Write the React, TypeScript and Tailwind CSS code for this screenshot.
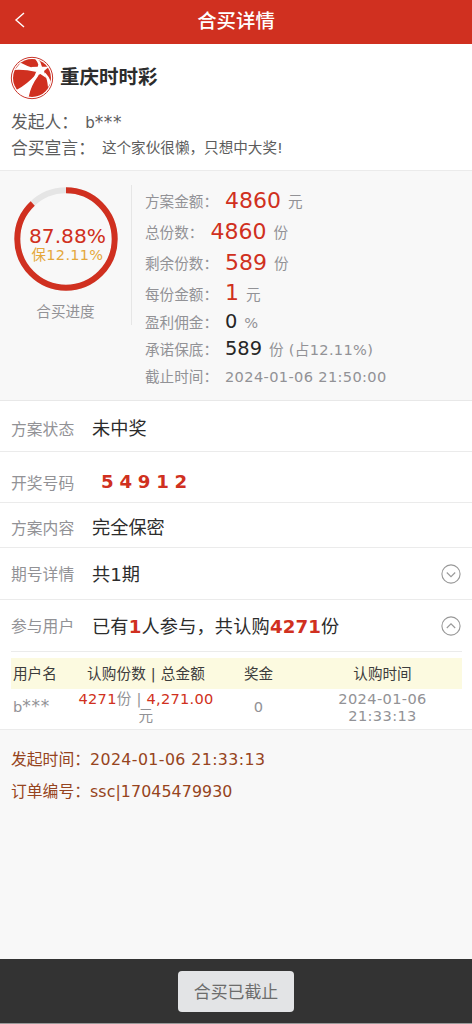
import type { ReactNode } from 'react'

interface StatLine {
  label: string
  value?: string
  unit: string
  dark?: boolean
  height: string
}

const stats: StatLine[] = [
  { label: '方案金额：', value: '4860', unit: '元', height: 'h-[31px]' },
  { label: '总份数：', value: '4860', unit: '份', height: 'h-[31px]' },
  { label: '剩余份数：', value: '589', unit: '份', height: 'h-[31px]' },
  { label: '每份金额：', value: '1', unit: '元', height: 'h-[30px]' },
  { label: '盈利佣金：', value: '0', unit: '%', dark: true, height: 'h-[27px]' },
  { label: '承诺保底：', value: '589', unit: '份 (占12.11%)', dark: true, height: 'h-[27px]' },
]

function Logo() {
  return (
    <svg className="h-11 w-11" viewBox="0 0 132 132">
      <circle cx="66" cy="66" r="62" fill="#fff" stroke="#c9362c" strokeWidth="3" />
      <circle cx="66" cy="66" r="57" fill="#d03020" />
      <g fill="#fff">
        <path d="M78 39 Q52 31 32 20 L14 42 Q44 40 80 48 Z" />
        <path d="M77 56 Q52 84 19 102 Q36 122 56 123 Q62 90 86 58 Z" />
        <path d="M103 54 Q112 68 114 94 L123 78 Q118 62 106 50 Z" />
        <path d="M85 26 Q82 16 75 8 L84 9 L91 22 Z" />
        <path d="M89 13 L96 32 L117 32 L102 45 L109 66 L91 54 L72 64 L79 46 L62 33 L83 32 Z" />
      </g>
    </svg>
  )
}

function ProgressRing({ percent }: { percent: number }) {
  const r = 48.7
  const length = 2 * Math.PI * r
  return (
    <svg className="h-[104px] w-[104px] -rotate-90" viewBox="0 0 104 104" fill="none" strokeWidth="6">
      <circle cx="52" cy="52" r={r} stroke="#e5e5e5" />
      <circle cx="52" cy="52" r={r} stroke="#d03020" strokeDasharray={`${(length * percent) / 100} ${length}`} />
    </svg>
  )
}

function CircleChevron({ up }: { up?: boolean }) {
  return (
    <svg className="h-5 w-5" viewBox="0 0 20 20" fill="none" stroke="#999" strokeWidth="1.1">
      <circle cx="10" cy="10" r="9.1" />
      <path d={up ? 'M5.8 12 L10 7.8 L14.2 12' : 'M5.8 8.5 L10 12.7 L14.2 8.5'} />
    </svg>
  )
}

function Row({ label, height, children }: { label: string; height: string; children: ReactNode }) {
  return (
    <div className={`flex items-center border-b border-[#ebebeb] px-[11px] ${height}`}>
      <span className="w-[81px] pt-0.5 text-[15.8px] text-[#929296]">{label}</span>
      {children}
    </div>
  )
}

export default function App() {
  return (
    <div className="flex h-[1024px] w-[472px] flex-col overflow-hidden bg-[#f8f8f8] font-['DejaVu_Sans','Noto_Sans_CJK_SC',sans-serif] leading-none whitespace-nowrap">
      <header className="flex h-11 shrink-0 items-center bg-[#d03020] pl-[14px] text-white">
        <svg className="-mt-1 h-4 w-3" viewBox="0 0 12 16" fill="none" stroke="currentColor" strokeWidth="1.4">
          <path d="M10 1 L2 8 L10 15" />
        </svg>
        <h1 className="flex-1 pr-[26px] text-center text-[19.4px] font-medium">合买详情</h1>
      </header>

      <section className="h-[127px] shrink-0 border-b border-[#ebebeb] bg-white pt-3 pl-[10px]">
        <div className="flex h-11 items-center">
          <Logo />
          <h2 className="ml-1.5 text-[19.5px] font-bold text-[#2c2c2c]">重庆时时彩</h2>
        </div>
        <div className="mt-[9px] flex h-[26px] items-center pl-px text-[16.8px] text-[#5c5c5c]">
          <span>发起人：</span>
          <span className="ml-[7px] text-[15px]">
            b<span className="text-[17px] tracking-[0.7px]">***</span>
          </span>
        </div>
        <div className="flex h-[26px] items-center pl-px text-[16.8px] text-[#5c5c5c]">
          <span>合买宣言：</span>
          <span className="ml-[7px] pt-px text-[14.6px]">这个家伙很懒，只想中大奖!</span>
        </div>
      </section>

      <section className="flex h-[230px] shrink-0 border-b border-[#e8e8e8] pt-[14px] text-[#929296]">
        <div className="flex h-[140px] w-[132px] flex-col items-center border-r border-[#e6e6e6] pt-0.5">
          <div className="grid place-items-center">
            <div className="col-start-1 row-start-1">
              <ProgressRing percent={87.88} />
            </div>
            <div className="col-start-1 row-start-1 mt-[11px] ml-1 text-center">
              <div className="text-[20.2px] text-[#d03020]">87.88%</div>
              <div className="mt-0.5 text-[14.5px] tracking-[0.3px] text-[#e5a83b]">保12.11%</div>
            </div>
          </div>
          <div className="mt-3.5 text-[14.6px]">合买进度</div>
        </div>
        <div className="pl-[13px] text-[14.6px]">
          {stats.map((s) => (
            <div key={s.label} className={`flex items-center ${s.height}`}>
              <span className="pt-1">{s.label}</span>
              <span className={`ml-[7px] ${s.dark ? 'text-[19.4px] text-[#262626]' : 'text-[22px] text-[#d03020]'}`}>
                {s.value}
              </span>
              <span className="ml-[7px] pt-1 tracking-[0.3px]">{s.unit}</span>
            </div>
          ))}
          <div className="flex h-[29px] items-center pt-px">
            <span>截止时间：</span>
            <span className="ml-[7px] tracking-[0.35px]">2024-01-06 21:50:00</span>
          </div>
        </div>
      </section>

      <section className="shrink-0 bg-white text-[18.2px] text-[#2c2c2c]">
        <Row label="方案状态" height="h-[51px] pt-1.5">未中奖</Row>
        <Row label="开奖号码" height="h-[51px] pt-[11px]">
          <span className="pl-[9px] font-bold tracking-[-0.3px] text-[#d03020]">5 4 9 1 2</span>
        </Row>
        <Row label="方案内容" height="h-[45px] pt-1.5">完全保密</Row>
        <Row label="期号详情" height="h-[52px]">
          <span className="flex-1 pt-1">共1期</span>
          <CircleChevron />
        </Row>
        <div className="flex h-[51px] items-center px-[11px] pt-px">
          <span className="w-[81px] pt-0.5 text-[15.8px] text-[#929296]">参与用户</span>
          <span className="flex-1 pt-[3px] tracking-[0.15px]">
            已有<b className="text-[#d03020]">1</b>人参与，共认购<b className="text-[#d03020]">4271</b>份
          </span>
          <CircleChevron up />
        </div>
        <div className="mr-[10px] ml-[11px] border-t border-[#ebebeb] pt-1.5 text-[14.6px]">
          <div className="flex h-[31px] items-center bg-[#fcfae0] pt-0.5 text-[#3c3c3c]">
            <span className="w-[65px] pl-0.5">用户名</span>
            <span className="w-[140px] text-center tracking-[0.15px]">认购份数 | 总金额</span>
            <span className="w-[85px] text-center">奖金</span>
            <span className="flex-1 pl-0.5 text-center">认购时间</span>
          </div>
          <div className="flex h-10 items-center pb-[5px] leading-[17px] text-[#929296]">
            <span className="w-[65px] pl-0.5">
              b<span className="text-[17px] tracking-[0.7px]">***</span>
            </span>
            <span className="w-[140px] text-center tracking-[0.25px]">
              <span className="text-[#d03020]">4271</span>份 | <span className="text-[#d03020]">4,271.00</span>
              <br />元
            </span>
            <span className="w-[85px] text-center">0</span>
            <span className="flex-1 pl-0.5 text-center tracking-[0.35px]">
              2024-01-06
              <br />
              21:33:13
            </span>
          </div>
        </div>
      </section>

      <section className="flex-1 border-t border-[#ebebeb] pt-[14px] pl-[11px] text-[15.8px] text-[#964420]">
        <div className="flex h-8 items-center">
          <span>发起时间：</span>
          <span className="tracking-[0.4px]">2024-01-06 21:33:13</span>
        </div>
        <div className="flex h-[31px] items-center">
          <span>订单编号：</span>
          <span className="tracking-[0.1px]">ssc|17045479930</span>
        </div>
      </section>

      <footer className="flex h-[65px] shrink-0 items-center justify-center border-b border-[#999] bg-[#333]">
        <button className="h-[41px] w-[116px] rounded bg-[#e3e4e6] pt-0.5 text-[16.9px] text-[#6c6c6c]">合买已截止</button>
      </footer>
    </div>
  )
}
